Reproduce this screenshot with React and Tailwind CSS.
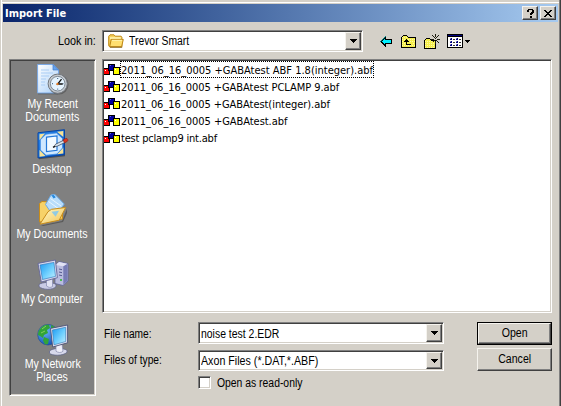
import React from "react";

const sans = "font-['Liberation_Sans',Arial,sans-serif]";
const tahoma = "font-['DejaVu_Sans_Condensed','DejaVu_Sans',Tahoma,sans-serif]";
const raised =
  "border border-t-[#f5f3ee] border-l-[#f5f3ee] border-r-[#404040] border-b-[#404040] shadow-[inset_-1px_-1px_0_#808080]";
const sunken =
  "border border-t-[#808080] border-l-[#808080] border-r-white border-b-white shadow-[inset_1px_1px_0_#404040,inset_-1px_-1px_0_#d4d0c8]";

function Arrow() {
  return (
    <svg width="7" height="4" viewBox="0 0 7 4" shapeRendering="crispEdges">
      <path d="M0 0h7v1h-1v1h-1v1h-1v1h-1v-1h-1v-1h-1v-1h-1z" fill="#000" />
    </svg>
  );
}

function SmallArrow() {
  return (
    <svg width="5" height="3" viewBox="0 0 5 3" shapeRendering="crispEdges">
      <path d="M0 0h5v1H4v1H3v1H2V2H1V1H0z" fill="#000" />
    </svg>
  );
}

function Combo({ className, children }) {
  return (
    <div className={`flex shrink-0 items-stretch bg-white p-px ${sunken} ${className}`}>
      <div className="flex min-w-0 flex-1 items-center">{children}</div>
      <div className={`flex w-4 items-center justify-center bg-[#d4d0c8] ${raised}`}>
        <Arrow />
      </div>
    </div>
  );
}

function FolderIcon() {
  return (
    <svg width="16" height="14" viewBox="0 0 16 14">
      <path d="M.7 2.2 2 .8h4l1.2 1.4h5.9l.8 1v9.6H1.6l-.9-1z" fill="#f5d15c" stroke="#c18a16" />
      <path d="M2 3.2h10.8v2H2z" fill="#fff3ac" />
      <path d="M3.2 5.4h12.1l-1.7 7.3H1.7z" fill="#ffdf70" stroke="#bd8514" />
      <path d="M4 6.3h10" stroke="#fff4b5" />
      <path d="M2 13.3h12.2" stroke="#80601d" strokeWidth=".8" />
    </svg>
  );
}

function BackIcon() {
  return (
    <svg width="13" height="11" viewBox="0 0 13 11" shapeRendering="crispEdges">
      <path d="M5 0h1v3h6v5H6v3H5v-1H4V9H3V8H2V7H1V6H0V5h1V4h1V3h1V2h1V1h1z" fill="#000" />
      <path d="M4 3h1v1h6v3H5v1H4V7H3V6H2V5h1V4h1z" fill="#00f0ff" />
      <path d="M5 0h1v1H5zM4 1h1v1H4zM3 2h1v1H3zM2 3h1v1H2zM1 4h1v1H1zM0 5h1v1H0z" fill="#008484" />
    </svg>
  );
}

function UpIcon() {
  return (
    <svg width="15" height="13" viewBox="0 0 15 13" shapeRendering="crispEdges">
      <path d="M1 1h1V0h4v1h1v1h8v11H0V2h1z" fill="#000" />
      <path d="M1 2h1V1h4v1h1v1h7v9H1z" fill="#f5ee4c" />
      <path d="M1 2.5h5M1 4.5h13M1 6.5h3M9 6.5h5M1 8.5h4M12 8.5h2M1 10.5h13" stroke="#fdfaa8" strokeDasharray="1 1" />
      <path d="M5 4h1v1h1v1h1v1H6v2h4v1H5V7H3V6h1V5h1z" fill="#000" />
    </svg>
  );
}

function NewFolderIcon() {
  return (
    <svg width="16" height="15" viewBox="0 0 16 15" shapeRendering="crispEdges">
      <path d="M1 5h1V4h4v1h1v1h5v9H0V6h1z" fill="#000" />
      <path d="M1 6h1V5h4v1h1v1h4v7H1z" fill="#f5ee4c" />
      <path d="M1 7.5h10M1 9.5h10M1 11.5h10M1 13.5h10" stroke="#fdfaa8" strokeDasharray="1 1" />
      <path
        d="M11 0h1v3h-1zM8 1h1v1H8zM9 2h1v1H9zM14 1h1v1h-1zM13 2h1v1h-1zM7 5h3v1H7zM13 5h3v1h-3zM11 4h1v1h-1zM10 3h1v1h-1zM12 3h1v1h-1zM10 6h1v1h-1zM12 6h1v1h-1zM13 7h1v1h-1zM14 8h1v1h-1zM11 7h1v3h-1zM9 7h1v1H9z"
        fill="#1d1d10"
      />
    </svg>
  );
}

function ViewsIcon() {
  return (
    <svg width="16" height="14" viewBox="0 0 16 14" shapeRendering="crispEdges">
      <path d="M0 0h16v14H0z" fill="#000" />
      <path d="M1 1h14v1H1z" fill="#000080" />
      <path d="M1 3h14v10H1z" fill="#fff" />
      <path d="M3 4h2v2H3zM9 4h2v2H9zM3 7h2v2H3zM9 7h2v2H9zM3 10h2v2H3zM9 10h2v2H9z" fill="#000080" />
      <path d="M3 4h1v1H3zM9 4h1v1H9zM3 7h1v1H3zM9 7h1v1H9zM3 10h1v1H3zM9 10h1v1H9z" fill="#8080c0" />
      <path d="M6 5h2v1H6zM12 5h2v1h-2zM6 8h2v1H6zM12 8h2v1h-2zM6 11h2v1H6zM12 11h2v1h-2z" fill="#333" />
    </svg>
  );
}

function AbfIcon() {
  return (
    <svg width="16" height="12" viewBox="0 0 16 12" shapeRendering="crispEdges">
      <path d="M0 4h6v7H0z" fill="#000" />
      <path d="M0 5h5v5H0z" fill="#f00" />
      <path d="M1 6h1v1H1z" fill="#fff" />
      <path d="M4 0h7v7H4z" fill="#000" />
      <path d="M5 1h5v5H5z" fill="#0000a0" />
      <path d="M6 1h1v1H6z" fill="#7070d0" />
      <path d="M9 3h7v8H9z" fill="#000" />
      <path d="M10 4h5v6h-5z" fill="#ff0" />
      <path d="M11 5h1v1h-1z" fill="#fff" />
    </svg>
  );
}

function RecentIcon() {
  return (
    <svg width="32" height="32" viewBox="0 0 32 32">
      <defs>
        <linearGradient id="rp" x1="0" y1="0" x2="1" y2="1">
          <stop offset="0" stopColor="#fff" />
          <stop offset="1" stopColor="#a8cff8" />
        </linearGradient>
      </defs>
      <path d="M1 29.6h20" stroke="#333" strokeWidth="1.3" opacity=".5" />
      <path d="M.6.5h15.6l5.3 5.5v23H.6z" fill="url(#rp)" stroke="#7ba9e6" />
      <path d="M16 .5V6h5.5z" fill="#66a4ef" stroke="#437dcc" strokeWidth=".7" />
      <path d="M4 6h8M4 9h12M4 12h8M4 15h5M4 18h4M4 21h4" stroke="#a9cdf5" />
      <circle cx="21.6" cy="20.6" r="10" fill="#444" opacity=".5" />
      <circle cx="20.7" cy="19.7" r="9.6" fill="#c3c8ce" stroke="#72777d" />
      <circle cx="20.7" cy="19.7" r="7.3" fill="#e5f4ff" stroke="#7e8993" />
      <path d="M20.7 14v1M20.7 24.6v1M15 19.7h1M25.5 19.7h1" stroke="#375b80" />
      <path d="M24.5 15.2l-3.8 4.8h5" fill="none" stroke="#111" strokeWidth="1.3" />
      <circle cx="20.5" cy="20" r="1.2" fill="#e67c22" />
    </svg>
  );
}

function DesktopIcon() {
  return (
    <svg width="32" height="32" viewBox="0 0 32 32">
      <defs>
        <linearGradient id="dt" x1="0" y1="0" x2="1" y2="1">
          <stop offset="0" stopColor="#2b8cf0" />
          <stop offset="1" stopColor="#0753bf" />
        </linearGradient>
      </defs>
      <path d="M2 5.5 28 2.2v25L2 30.3z" fill="#222" opacity=".5" />
      <path d="M1 3.8 27.5.7v25L1 29z" fill="url(#dt)" stroke="#0645a5" />
      <path d="M2.5 5.2 8 4.6 2.5 11zM20 2.8l6.3-.7v6zM2.5 21 8.5 27l-6 .7zM26.3 18.5v6l-6.3.8z" fill="#f6e296" />
      <path d="M9 5.2 19.5 4l6 5.5v9.5L20 25 9 26.2 3.4 21V10.8z" fill="#cfe8ff" stroke="#3f8de4" strokeWidth=".7" />
      <path d="M9.5 8.2 20 7v14.3L9.5 22.6z" fill="#f3faff" stroke="#2478d8" strokeWidth="1.2" />
      <path d="m16.8 18 1.8-2.8 8.2-4 1.4 2.2-8 3.8z" fill="#dbe6f0" stroke="#28364a" strokeWidth=".7" />
      <path d="m26 10.8 2.8-1.4c1.7-.4 2.9 2 1.4 3L27.5 14z" fill="#d83421" stroke="#85251b" strokeWidth=".6" />
      <path d="m16 18.4 2-1.2" stroke="#111" strokeWidth="1.3" />
    </svg>
  );
}

function DocumentsIcon() {
  return (
    <svg width="32" height="32" viewBox="0 0 32 32">
      <defs>
        <linearGradient id="df" x1="0" y1="0" x2="1" y2="1">
          <stop offset="0" stopColor="#fffcd0" />
          <stop offset="1" stopColor="#f2c250" />
        </linearGradient>
      </defs>
      <path d="m4 31.5 21-4.5 5-12v4l-4 9L6 32z" fill="#333" opacity=".5" />
      <path d="M2.5 28V9.5L5 7.5l5 .3 2 2.7 13.5 2V25z" fill="#f7d268" stroke="#c88c1a" />
      <path d="m8.5 10.5 5.5-9.5 4-.5 9.2 9.5-5.5 8-7.7.5z" fill="#b8ddfc" stroke="#6ba9e4" />
      <path d="m14.3 1.3 2.5-.3 2 2.2-2.2 1.3z" fill="#2588de" />
      <path d="M13.5 4.5 24 12M11.5 7.5 22 15" stroke="#e9f6ff" />
      <path d="m11 17.7 3.5-2.4 14.2-1.8-6.5 12.7L2.9 30.2z" fill="url(#df)" stroke="#c88c1a" />
      <path d="m14.5 17.7 7.5-1-3.4 6z" fill="#84c8ec" opacity=".9" />
    </svg>
  );
}

function MonitorDefs({ id }) {
  return (
    <defs>
      <linearGradient id={id} x1="0" y1="0" x2="1" y2="1">
        <stop offset="0" stopColor="#1a98f0" />
        <stop offset=".55" stopColor="#6fd0ff" />
        <stop offset="1" stopColor="#c5f0ff" />
      </linearGradient>
    </defs>
  );
}

function ComputerIcon() {
  return (
    <svg width="32" height="32" viewBox="0 0 32 32">
      <MonitorDefs id="mc" />
      <path d="m18 6 4-3.5 9 2V22l-5 4.5-8-2z" fill="#b9bcdf" stroke="#60639a" strokeWidth=".8" />
      <path d="m26.3 7 4.3-2.3v17l-4.3 4z" fill="#777cb4" />
      <path d="m18.4 6 3.8-3 8 1.8-4 2.5z" fill="#e1e2f4" />
      <path d="M22 10l3 .7M22 13l3 .7M22 16l3 .7" stroke="#555a91" />
      <path d="M23 21h2" stroke="#4bb853" strokeWidth="2" />
      <path d="M2 25.5c3-2.5 13-3 17 0v2c-3 4-14 3.5-17 0z" fill="#c9cbe5" stroke="#62668e" strokeWidth=".8" />
      <path d="m9.5 20 6-1v8.5c-2 1.5-4 1-6-.5z" fill="#e2e3f3" stroke="#8488b0" strokeWidth=".7" />
      <path d="M1 4.4 18.4 1l2 17.7L4.3 23z" fill="#d8daee" stroke="#62659a" strokeWidth=".9" />
      <path d="m3 6 13.9-2.6 1.6 14-13 3.1z" fill="url(#mc)" stroke="#2871b8" strokeWidth=".6" />
    </svg>
  );
}

function NetworkIcon() {
  return (
    <svg width="32" height="32" viewBox="0 0 32 32">
      <MonitorDefs id="mn" />
      <defs>
        <radialGradient id="gl" cx=".35" cy=".3" r=".8">
          <stop offset="0" stopColor="#6fb9ff" />
          <stop offset="1" stopColor="#0a48b0" />
        </radialGradient>
      </defs>
      <circle cx="11" cy="10.7" r="10.3" fill="url(#gl)" stroke="#1a4b91" strokeWidth=".6" />
      <path d="M3 5C6 1 9 .4 12 1l1 3-3 2 1 3-4 2-1 3-3-2-2-1c0-2 .5-4 2-6zM14 1l4 2-2 3-2-2zM7 13l5 2-1 5-3 .4-2-4z" fill="#32a338" />
      <path d="M5 5l4-3M4 9l4-2" stroke="#85d05e" />
      <path d="M12.5 27c3-3 13-3.6 17.5-.7v2c-4 4-15 3.5-17.5 1z" fill="#d7d9eb" stroke="#626789" strokeWidth=".8" />
      <path d="m19 21 6-.8 1 7c-2 2-5 1.5-7 0z" fill="#eeeef8" stroke="#8589ae" strokeWidth=".7" />
      <path d="M13.5 4.4 30.6 1v17.8L15.7 23z" fill="#dfe0ef" stroke="#4d5175" strokeWidth=".9" />
      <path d="m15.4 6 13.3-2.7v14.2L17 20.8z" fill="url(#mn)" stroke="#2d77b5" strokeWidth=".6" />
    </svg>
  );
}

const places = [
  { icon: <RecentIcon />, lines: [["My Recent", "scale-x-[0.88]"], ["Documents", "scale-x-[0.89]"]] },
  { icon: <DesktopIcon />, lines: [["Desktop", "scale-x-[0.9]"]] },
  { icon: <DocumentsIcon />, lines: [["My Documents", "scale-x-[0.89]"]] },
  { icon: <ComputerIcon />, lines: [["My Computer", "scale-x-[0.86]"]] },
  { icon: <NetworkIcon />, lines: [["My Network", "scale-x-[0.885]"], ["Places", "scale-x-[0.88]"]] },
];

const files = [
  ["2011_06_16_0005 +GABAtest ABF 1.8(integer).abf", ""],
  ["2011_06_16_0005 +GABAtest PCLAMP 9.abf", "tracking-[-0.05px]"],
  ["2011_06_16_0005 +GABAtest(integer).abf", "tracking-[-0.05px]"],
  ["2011_06_16_0005 +GABAtest.abf", "tracking-[-0.04px]"],
  ["test pclamp9 int.abf", "tracking-[-0.2px]"],
];

export default function App() {
  return (
    <div className={`h-[406px] w-[561px] overflow-hidden bg-[#d4d0c8] text-[11px] leading-[13px] whitespace-nowrap text-black ${sans}`}>
      <div className="h-full border-r border-r-[#404040] pl-px">
        <div className="h-full border-r border-l border-r-[#808080] border-l-white pt-0.5">
          <div className="h-full border-t border-t-white pt-px pr-px pl-px">
            <header className="flex h-[18px] items-center bg-linear-to-r from-[#0a246a] to-[#a6caf0] pr-0.5 pl-0.5">
              <h1 className={`flex-1 text-[11px] font-bold text-white ${tahoma}`}>Import File</h1>
              <div className="flex gap-0.5">
                <button className={`flex h-3.5 w-4 items-center justify-center bg-[#d4d0c8] ${raised}`}>
                  <svg width="7" height="9" viewBox="0 0 7 9" shapeRendering="crispEdges">
                    <path d="M1 0h5v1h1v3H6v1H5v1H3V4h1V3h1V1H2v2H0V1h1zM3 7h2v2H3z" fill="#000" />
                  </svg>
                </button>
                <button className={`flex h-3.5 w-4 items-center justify-center bg-[#d4d0c8] ${raised}`}>
                  <svg width="8" height="7" viewBox="0 0 8 7" shapeRendering="crispEdges">
                    <path d="M0 0h2v1h1v1h2V1h1V0h2v1H7v1H6v1H5v1h1v1h1v1h1v1H6V6H5V5H3v1H2v1H0V6h1V5h1V4h1V3H2V2H1V1H0z" fill="#000" />
                  </svg>
                </button>
              </div>
            </header>

            <div className="mt-2 flex h-[22px] items-center">
              <span className="w-[99px] pl-[55px]">
                <span className="inline-block origin-left scale-x-[0.9] text-[12px]">Look in:</span>
              </span>
              <Combo className="h-[22px] w-[261px]">
                <span className="pl-1">
                  <FolderIcon />
                </span>
                <span className="ml-[5px] origin-left scale-x-[0.865] text-[12px]">Trevor Smart</span>
              </Combo>
              <span className="ml-[17px]">
                <BackIcon />
              </span>
              <span className="ml-2">
                <UpIcon />
              </span>
              <span className="ml-2">
                <NewFolderIcon />
              </span>
              <span className="ml-[7px]">
                <ViewsIcon />
              </span>
              <span className="ml-0.5">
                <SmallArrow />
              </span>
            </div>

            <div className="mt-[7px] flex gap-1.5 pl-1.5">
              <nav className={`h-[337px] w-[87px] bg-[#808080] pt-1 text-white ${sunken}`}>
                {places.map((p, i) => (
                  <div key={i} className="flex h-[65px] flex-col items-center">
                    {p.icon}
                    {p.lines.map(([t, cls]) => (
                      <span key={t} className={`relative top-0.5 text-[12px] leading-[13px] ${cls}`}>
                        {t}
                      </span>
                    ))}
                  </div>
                ))}
              </nav>

              <main className="w-[450px]">
                <ul className={`h-[254px] bg-white pt-px pl-px ${sunken} ${tahoma}`}>
                  {files.map(([name, cls], i) => (
                    <li key={name} className="flex h-[17px] items-center">
                      <AbfIcon />
                      <span
                        className={`h-[17px] border border-dotted pt-px leading-[16px] ${i === 0 ? "border-black" : "border-transparent"} ${cls}`}
                      >
                        {name}
                      </span>
                    </li>
                  ))}
                </ul>
                <form className="mt-[9px] flex text-[12px]">
                  <div className="w-[342px]">
                    <div className="flex h-[22px] items-center">
                      <label className="w-24 pt-0.5 pl-0.5">
                        <span className="inline-block origin-left scale-x-[0.85]">File name:</span>
                      </label>
                      <Combo className="h-[22px] w-[246px]">
                        <span className="ml-px origin-left scale-x-[0.87] pt-0.5">noise test 2.EDR</span>
                      </Combo>
                    </div>
                    <div className="mt-[6px] flex h-[21px] items-center">
                      <label className="w-24 pl-0.5">
                        <span className="inline-block origin-left scale-x-[0.85]">Files of type:</span>
                      </label>
                      <Combo className="h-[21px] w-[246px]">
                        <span className="ml-px origin-left scale-x-[0.89] pt-0.5">Axon Files (*.DAT,*.ABF)</span>
                      </Combo>
                    </div>
                    <div className="mt-[5px] flex h-[13px] items-center pl-24">
                      <span className={`h-[13px] w-[13px] bg-white ${sunken}`} />
                      <span className="ml-1.5 origin-left scale-x-[0.865] pt-0.5">Open as read-only</span>
                    </div>
                  </div>
                  <div className="ml-[33px] flex flex-col gap-[3px]">
                    <div className="h-[23px] w-[75px] border border-black">
                      <button type="button" className={`h-full w-full bg-[#d4d0c8] ${raised}`}>
                        <span className="inline-block scale-x-[0.88]">Open</span>
                      </button>
                    </div>
                    <button type="button" className={`h-[23px] w-[75px] bg-[#d4d0c8] ${raised}`}>
                      <span className="inline-block scale-x-[0.88]">Cancel</span>
                    </button>
                  </div>
                </form>
              </main>
            </div>
          </div>
        </div>
      </div>
    </div>
  );
}
